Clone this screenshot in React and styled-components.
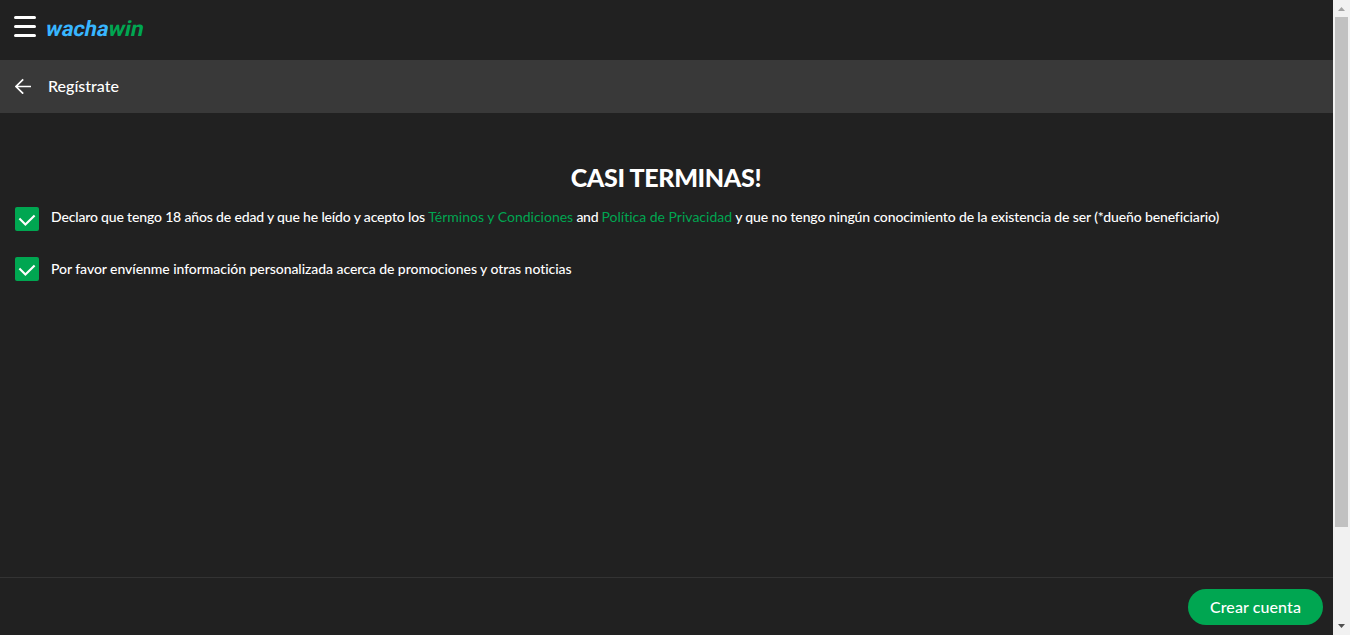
import React from "react";
import styled, { createGlobalStyle } from "styled-components";

const GlobalStyle = createGlobalStyle`
  * { box-sizing: border-box; }
  html, body { margin: 0; padding: 0; overflow: hidden; }
  body {
    background: #212121;
    color: #fff;
    font-family: Lato, "Liberation Sans", sans-serif;
    font-variant-ligatures: none;
  }
`;

const Window = styled.div`
  display: flex;
  width: 100%;
  height: 635px;
`;

const Page = styled.div`
  flex: 1;
  min-width: 0;
  display: flex;
  flex-direction: column;
  background: #212121;
`;

const Header = styled.header`
  height: 60px;
  flex: none;
  display: flex;
  align-items: flex-start;
  padding: 16px 0 0 14px;
`;

const MenuButton = styled.button`
  width: 22px;
  height: 21px;
  padding: 0;
  border: 0;
  background: none;
  display: flex;
  flex-direction: column;
  justify-content: space-between;
`;

const MenuBar = styled.span`
  display: block;
  width: 22px;
  height: 3px;
  border-radius: 1.5px;
  background: #fff;
`;

const Brand = styled.svg`
  display: block;
  margin-left: 8px;
  font-family: Roboto, sans-serif;
  font-size: 21.5px;
  font-weight: 700;
`;

const TitleBar = styled.div`
  height: 53px;
  flex: none;
  display: flex;
  align-items: center;
  padding: 0 0 1px 15px;
  background: #393939;
  font-size: 16px;
  line-height: 20px;
  font-weight: 500;
`;

const BackIcon = styled.svg`
  display: block;
  margin-right: 17px;
`;

const Main = styled.main`
  flex: 1;
  padding: 48px 15px 0;
`;

const Heading = styled.h1`
  margin: 0;
  padding-right: 1px;
  font-size: 25px;
  line-height: 32px;
  font-weight: 900;
  letter-spacing: -0.35px;
  text-align: center;
`;

const Option = styled.label`
  display: flex;
  align-items: flex-start;
  margin-top: ${(p) => p.$gap}px;
  height: 24px;
`;

const Checkbox = styled.span`
  flex: none;
  width: 24px;
  height: 24px;
  border-radius: 2px;
  background: #00a651;
  margin-right: 12px;

  svg { display: block; }
`;

const OptionText = styled.span`
  font-size: 14px;
  line-height: 20px;
  font-weight: 500;
  letter-spacing: ${(p) => p.$tracking}px;
  white-space: nowrap;
  padding-top: ${(p) => p.$top || 0}px;
`;

const Phrase = styled.span`
  letter-spacing: ${(p) => p.$tracking}px;
`;

const Link = styled.a`
  color: #00a651;
  font-weight: 400;
  letter-spacing: 0;
`;

const Footer = styled.footer`
  height: 58px;
  flex: none;
  border-top: 1px solid #333;
  padding: 11px 10px 0;
  display: flex;
  justify-content: flex-end;
  align-items: flex-start;
`;

const SubmitButton = styled.button`
  width: 135px;
  height: 36px;
  padding: 0 0 2px;
  border: 0;
  border-radius: 18px;
  background: #00a651;
  color: #fff;
  font-family: inherit;
  font-size: 16px;
  font-weight: 500;
  letter-spacing: 0.1px;
`;

const Scrollbar = styled.div`
  width: 17px;
  flex: none;
  background: #f1f1f1;
  display: flex;
  flex-direction: column;
  align-items: center;
`;

const ScrollArrow = styled.svg`
  display: block;
  flex: none;
`;

const ScrollTrack = styled.div`
  flex: 1;
  width: 13px;
`;

const ScrollThumb = styled.div`
  height: 510px;
  background: #c1c1c1;
`;

const Check = () => (
  <svg width="24" height="24" viewBox="0 0 24 24">
    <path d="M4.4 11.6l6 6 9.2-9.2" fill="none" stroke="#fff" strokeWidth="2.1" />
  </svg>
);

export default function App() {
  return (
    <>
      <GlobalStyle />
      <Window>
        <Page>
          <Header>
            <MenuButton aria-label="Menu">
              <MenuBar />
              <MenuBar />
              <MenuBar />
            </MenuButton>
            <Brand width="110" height="26" viewBox="0 0 110 26" role="img" aria-label="wachawin">
              <g transform="translate(.8 20) skewX(-12)">
                <text x="0" y="0" fill="#38b6ff" textLength="62.5" lengthAdjust="spacingAndGlyphs">wacha</text>
                <text x="62.5" y="0" fill="#00a651" textLength="35.2" lengthAdjust="spacingAndGlyphs">win</text>
              </g>
            </Brand>
          </Header>
          <TitleBar>
            <BackIcon width="16" height="16" viewBox="0 0 16 16">
              <path d="M16 8.5H1.2M8.2 1.3L1 8.5l7.2 7.2" fill="none" stroke="#fff" strokeWidth="1.7" />
            </BackIcon>
            Regístrate
          </TitleBar>
          <Main>
            <Heading>CASI TERMINAS!</Heading>
            <Option $gap={14}>
              <Checkbox><Check /></Checkbox>
              <OptionText $tracking={-0.157}>
                Declaro que tengo 18 años de edad y que he leído y acepto los{" "}
                <Link>Términos y Condiciones</Link>
                <Phrase $tracking={-0.28}> and </Phrase>
                <Link>Política de Privacidad</Link>
                <Phrase $tracking={-0.122}>
                  {" "}y que no tengo ningún conocimiento de la existencia de ser (*dueño beneficiario)
                </Phrase>
              </OptionText>
            </Option>
            <Option $gap={26}>
              <Checkbox><Check /></Checkbox>
              <OptionText $top={2} $tracking={-0.052}>
                Por favor envíenme información personalizada acerca de promociones y otras noticias
              </OptionText>
            </Option>
          </Main>
          <Footer>
            <SubmitButton>Crear cuenta</SubmitButton>
          </Footer>
        </Page>
        <Scrollbar>
          <ScrollArrow width="17" height="17" viewBox="0 0 17 17">
            <path d="M5 11l3.5-4 3.5 4z" fill="#a3a3a3" />
          </ScrollArrow>
          <ScrollTrack><ScrollThumb /></ScrollTrack>
          <ScrollArrow width="17" height="17" viewBox="0 0 17 17">
            <path d="M5 6l3.5 4 3.5-4z" fill="#505050" />
          </ScrollArrow>
        </Scrollbar>
      </Window>
    </>
  );
}
